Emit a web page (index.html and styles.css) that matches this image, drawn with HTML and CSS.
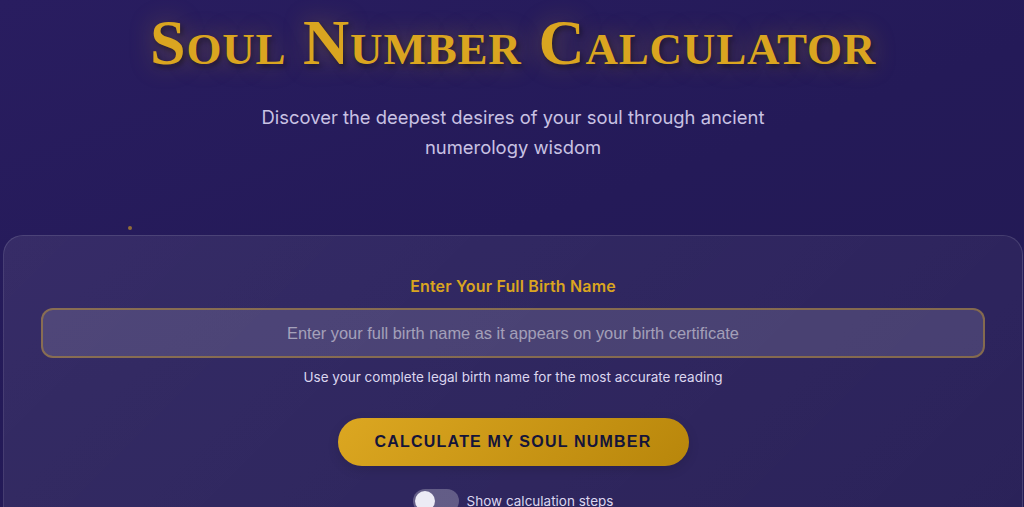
FILE: index.html
```html
<!DOCTYPE html>
<html lang="en">
<head>
<meta charset="utf-8">
<title>Soul Number Calculator</title>
<link rel="stylesheet" href="styles.css">
</head>
<body>
<div class="particle"></div>
<main class="page">
  <header class="hero">
    <h1 class="title">Soul Number Calculator</h1>
    <p class="subtitle">Discover the deepest desires of your soul through ancient numerology wisdom</p>
  </header>
  <section class="card">
    <label class="label" for="name">Enter Your Full Birth Name</label>
    <input class="input" id="name" type="text" placeholder="Enter your full birth name as it appears on your birth certificate">
    <p class="help">Use your complete legal birth name for the most accurate reading</p>
    <button class="btn" type="button">Calculate My Soul Number</button>
    <div class="toggle-row">
      <span class="toggle"><span class="knob"></span></span>
      <span class="toggle-text">Show calculation steps</span>
    </div>
  </section>
</main>
</body>
</html>
```
FILE: styles.css
```css
html, body {
  margin: 0;
  padding: 0;
}
body {
  min-height: 507px;
  background: linear-gradient(160deg, #291d60 0%, #241a58 45%, #221a52 100%);
  font-family: Inter, "Noto Sans", sans-serif;
  color: #fff;
  overflow: hidden;
  position: relative;
}
.particle {
  position: absolute;
  left: 128px;
  top: 226px;
  width: 4px;
  height: 4px;
  border-radius: 50%;
  background: rgba(218, 165, 32, 0.6);
}
.page {
  padding: 0 1px 0 3px;
}
.hero {
  text-align: center;
  padding-top: 5px;
}
.title {
  margin: 0;
  font-family: "Liberation Serif", serif;
  font-variant: small-caps;
  font-weight: 700;
  font-size: 64px;
  line-height: 1.2;
  letter-spacing: 0.8px;
  color: #daa520;
  text-shadow: 0 0 24px rgba(218, 165, 32, 0.35), 2px 3px 5px rgba(0, 0, 0, 0.45);
}
.subtitle {
  margin: 20px auto 0;
  max-width: 530px;
  font-size: 18.4px;
  line-height: 30px;
  color: #c9c2e3;
}
.card {
  margin-top: 73px;
  border: 1px solid rgba(255, 255, 255, 0.12);
  border-radius: 20px;
  background: linear-gradient(135deg, rgba(255, 255, 255, 0.08), rgba(255, 255, 255, 0.04));
  padding: 38px 37px 40px;
  display: flex;
  flex-direction: column;
  align-items: center;
}
.label {
  font-size: 16px;
  line-height: 24px;
  font-weight: 600;
  letter-spacing: 0.15px;
  color: #daa520;
}
.input {
  margin-top: 10px;
  box-sizing: border-box;
  width: 100%;
  height: 50px;
  border-radius: 12px;
  border: 2px solid rgba(218, 165, 32, 0.42);
  background: rgba(255, 255, 255, 0.13);
  font-family: "Liberation Sans", Arial, sans-serif;
  font-size: 16.4px;
  text-align: center;
  color: #fff;
  outline: none;
  padding-top: 2px;
}
.input::placeholder {
  color: rgba(255, 255, 255, 0.5);
}
.help {
  margin: 9px 0 0;
  font-size: 13.5px;
  line-height: 20px;
  color: #dcd6ef;
}
.btn {
  margin-top: 31px;
  width: 351px;
  height: 48px;
  border: none;
  border-radius: 24px;
  background: linear-gradient(135deg, #dca721, #b8860b);
  font-family: "Liberation Sans", Arial, sans-serif;
  font-weight: 700;
  font-size: 16px;
  letter-spacing: 1.2px;
  text-transform: uppercase;
  color: #14143a;
  box-shadow: 0 4px 12px rgba(0, 0, 0, 0.12);
}
.toggle-row {
  margin-top: 23px;
  display: flex;
  align-items: center;
  gap: 8px;
}
.toggle {
  width: 46px;
  height: 24px;
  border-radius: 12px;
  background: rgba(255, 255, 255, 0.25);
  display: flex;
  align-items: center;
  padding-left: 2px;
  box-sizing: border-box;
}
.knob {
  width: 20px;
  height: 20px;
  border-radius: 50%;
  background: #ecebf5;
}
.toggle-text {
  font-size: 13.5px;
  line-height: 24px;
  color: #dcd6ef;
}
```
